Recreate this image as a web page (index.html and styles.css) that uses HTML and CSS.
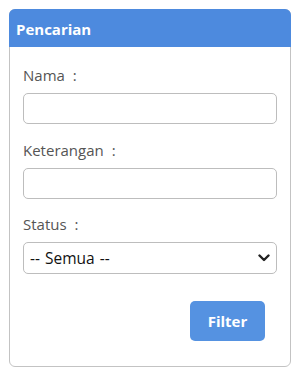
FILE: index.html
```html
<!DOCTYPE html>
<html>
<head>
<meta charset="utf-8">
<link rel="stylesheet" href="styles.css">
</head>
<body>
<div class="card">
  <div class="card-header">Pencarian</div>
  <div class="card-body">
    <div class="field field-first">
      <label class="label">Nama<span class="colon">:</span></label>
      <input class="input" type="text">
    </div>
    <div class="field">
      <label class="label">Keterangan<span class="colon">:</span></label>
      <input class="input" type="text">
    </div>
    <div class="field">
      <label class="label">Status<span class="colon">:</span></label>
      <div class="select-wrap">
        <select class="select"><option>-- Semua --</option></select>
        <svg class="chevron" width="12" height="8" viewBox="0 0 12 8"><path d="M1.5 1.5 L6 6 L10.5 1.5" fill="none" stroke="#222" stroke-width="2.4" stroke-linecap="round" stroke-linejoin="round"/></svg>
      </div>
    </div>
    <div class="actions">
      <button class="btn">Filter</button>
    </div>
  </div>
</div>
</body>
</html>
```
FILE: styles.css
```css
* { box-sizing: border-box; }
body {
  margin: 0;
  padding: 9px 11px 0 9px;
  background: #fff;
  font-family: "Open Sans", "Noto Sans", sans-serif;
}
.card {
  width: 282px;
  height: 358px;
  border: 1px solid #c3c3c3;
  border-radius: 6px;
  display: flex;
  flex-direction: column;
}
.card-header {
  background: #4d8ade;
  color: #fff;
  font-weight: 700;
  font-size: 15px;
  height: 38px;
  margin: -1px -1px 0 -1px;
  padding: 0 7px;
  border-radius: 6px 6px 0 0;
  display: flex;
  align-items: center;
  padding-top: 2px;
}
.card-body {
  padding: 18px 13px 0 13px;
  display: flex;
  flex-direction: column;
}
.field {
  display: flex;
  flex-direction: column;
  margin-bottom: 15px;
}
.field-first {
  margin-bottom: 16px;
}
.label {
  font-size: 15px;
  line-height: 20px;
  color: #555;
  margin-bottom: 8px;
}
.colon {
  margin-left: 8px;
}
.input {
  height: 31px;
  border: 1px solid #bdbdbd;
  border-radius: 5px;
  font-size: 15px;
  font-family: inherit;
  padding: 0 7px;
  outline: none;
}
.select-wrap {
  position: relative;
}
.select {
  appearance: none;
  -webkit-appearance: none;
  width: 100%;
  height: 32px;
  border: 1px solid #bdbdbd;
  border-radius: 5px;
  background: #fff;
  font-family: inherit;
  font-size: 15.5px;
  word-spacing: 1px;
  color: #111;
  padding: 0 6px;
}
.chevron {
  position: absolute;
  right: 7px;
  top: 12px;
}
.actions {
  display: flex;
  justify-content: flex-end;
  padding-right: 12px;
  margin-top: 12px;
}
.btn {
  width: 75px;
  height: 40px;
  background: #5592e1;
  color: #fff;
  border: none;
  border-radius: 5px;
  font-family: inherit;
  font-weight: 700;
  font-size: 15px;
}
```
